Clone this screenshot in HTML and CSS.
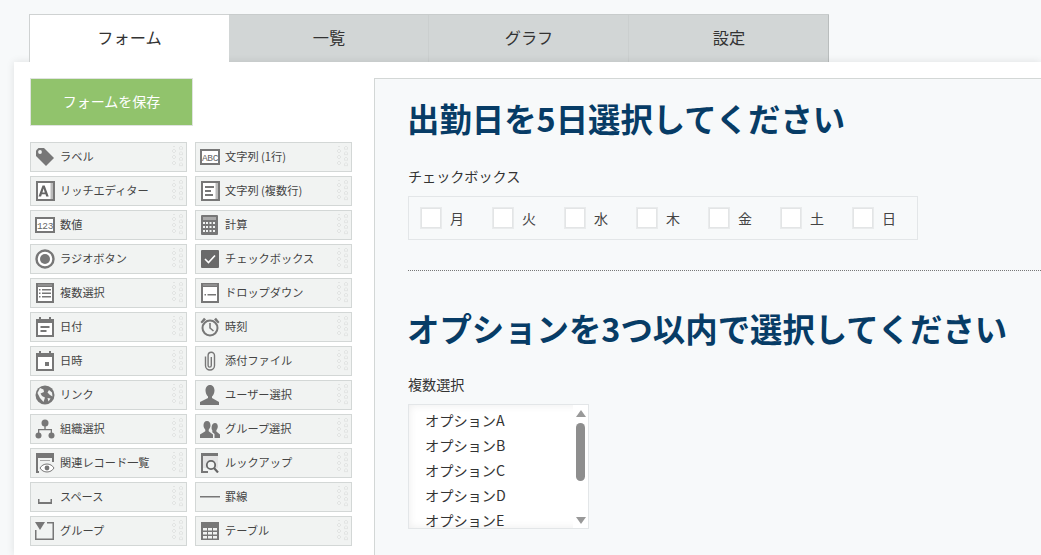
FILE: index.html
```html
<!DOCTYPE html>
<html lang="ja">
<head>
<meta charset="utf-8">
<title>フォーム</title>
<link rel="stylesheet" href="styles.css">
</head>
<body>
<nav class="tabs">
  <div class="tab active">フォーム</div>
  <div class="tab">一覧</div>
  <div class="tab">グラフ</div>
  <div class="tab">設定</div>
</nav>
<main class="panel">
  <aside class="side">
    <button class="save"><span>フォームを保存</span></button>
    <div class="palette">
      <div class="item"><svg class="ic" viewBox="0 0 20 20"><path d="M1 3.500 3.500 1H9l10 10-8 8L1 9Z"/><circle cx="5" cy="5" r="1.900" fill="#f1f3f2"/></svg><span>ラベル</span><i class="grip"></i></div>
      <div class="item"><svg class="ic" viewBox="0 0 20 20"><rect x="1" y="3" width="18" height="14" fill="#fff" stroke="#777" stroke-width="2"/><text x="10" y="13.500" class="ict">ABC</text></svg><span>文字列 (1行)</span><i class="grip"></i></div>

      <div class="item"><svg class="ic" viewBox="0 0 20 20"><rect x="1" y="0" width="19" height="20"/><rect x="3" y="2" width="15" height="16" fill="#fff"/><rect x="15.500" y="2" width="2.500" height="16" fill="#bbb"/><path d="M3.500 15.500 7.500 4.500h2.200l4 11h-2.500l-.7-2.200H6.800l-.7 2.200ZM7.400 11.500h2.400L8.600 7.500Z" fill="#666"/></svg><span>リッチエディター</span><i class="grip"></i></div>
      <div class="item"><svg class="ic" viewBox="0 0 20 20"><rect x="1" y="0" width="19" height="20"/><rect x="3" y="2" width="15" height="16" fill="#fff"/><rect x="15.500" y="2" width="2.500" height="16" fill="#bbb"/><path d="M5 5h9v2H5ZM5 9h6v2H5ZM5 13h8v2H5Z"/></svg><span>文字列 (複数行)</span><i class="grip"></i></div>

      <div class="item"><svg class="ic" viewBox="0 0 20 20"><rect x="1" y="3" width="18" height="14" fill="#fff" stroke="#777" stroke-width="2"/><text x="10" y="13.500" class="ict">123</text></svg><span>数値</span><i class="grip"></i></div>
      <div class="item"><svg class="ic" viewBox="0 0 20 20"><path d="M2 0h15a1 1 0 0 1 1 1v18a1 1 0 0 1-1 1H2a1 1 0 0 1-1-1V1a1 1 0 0 1 1-1Z"/><path d="M3 2h13v3H3Z" fill="#aaa"/><path d="M3 7h2v2H3ZM6 7h2v2H6ZM9.500 7h2v2h-2ZM13 7h2v2h-2ZM3 11h2v2H3ZM6 11h2v2H6ZM9.500 11h2v2h-2ZM13 11h2v2h-2ZM3 15h2v2H3ZM6 15h2v2H6ZM9.500 15h2v2h-2ZM13 15h2v2h-2Z" fill="#f1f3f2"/></svg><span>計算</span><i class="grip"></i></div>

      <div class="item"><svg class="ic" viewBox="0 0 20 20"><circle cx="10" cy="10" r="8.500" fill="#fff" stroke="#777" stroke-width="2.400"/><circle cx="10" cy="10" r="5"/></svg><span>ラジオボタン</span><i class="grip"></i></div>
      <div class="item"><svg class="ic" viewBox="0 0 20 20"><rect x="1" y="1" width="18" height="18" rx="1" fill="#6a6a6a"/><path d="m5 10 3.500 3.500L15 6.500" fill="none" stroke="#fff" stroke-width="1.600"/></svg><span>チェックボックス</span><i class="grip"></i></div>

      <div class="item"><svg class="ic" viewBox="0 0 20 20"><rect x="1" y="0" width="18" height="20"/><rect x="3" y="4" width="14" height="14" fill="#fff"/><path d="M3 1.500h14v1H3Z" fill="#aaa"/><path d="M4 6h1.500v1.500H4ZM7 6h9v1.500H7ZM4 9.500h1.500V11H4ZM7 9.500h9V11H7ZM4 13h1.500v1.500H4ZM7 13h9v1.500H7Z"/></svg><span>複数選択</span><i class="grip"></i></div>
      <div class="item"><svg class="ic" viewBox="0 0 20 20"><rect x="1" y="0" width="18" height="20"/><rect x="3" y="4" width="14" height="14" fill="#fff"/><path d="M3 1.500h14v1H3Z" fill="#aaa"/><path d="M4.500 11h1.500v1.500H4.500ZM7.500 11H16v1.500H7.500Z"/></svg><span>ドロップダウン</span><i class="grip"></i></div>

      <div class="item"><svg class="ic" viewBox="0 0 20 20"><path d="M4 0h2v2h8V0h2v2h3v18H1V2h3Z"/><rect x="3" y="6" width="14" height="12" fill="#fff"/><path d="M5.500 9h9v2h-9ZM5.500 13h6v2h-6Z"/></svg><span>日付</span><i class="grip"></i></div>
      <div class="item"><svg class="ic" viewBox="0 0 20 20"><circle cx="10" cy="11" r="7.500" fill="none" stroke="#777" stroke-width="2"/><path d="M10 6v5l3.500 3" fill="none" stroke="#777" stroke-width="1.600"/><path d="M0.500 5 4 0.800 6 2.500 2 6.500ZM19.500 5 16 0.800 14 2.500 18 6.500Z"/></svg><span>時刻</span><i class="grip"></i></div>

      <div class="item"><svg class="ic" viewBox="0 0 20 20"><path d="M4 0h2v2h8V0h2v2h3v18H1V2h3Z"/><rect x="3" y="6" width="14" height="12" fill="#fff"/><rect x="10" y="11" width="4" height="4"/></svg><span>日時</span><i class="grip"></i></div>
      <div class="item"><svg class="ic" viewBox="0 0 20 20"><path d="M5.500 5.500v9a4.500 4.500 0 0 0 9 0v-10a3.200 3.200 0 0 0-6.400 0v10a1.600 1.600 0 0 0 3.200 0V6" fill="none" stroke="#777" stroke-width="1.400"/></svg><span>添付ファイル</span><i class="grip"></i></div>

      <div class="item"><svg class="ic" viewBox="0 0 20 20"><circle cx="10" cy="10" r="9.500"/><path d="M5 3 8.500 4.500 9 7 5.500 8.500 7 11l3 1.500-1.500 4.500L5 13 2.500 8ZM14 5l3 2.500.5 4-2.500-1.500-2.500-2.500ZM12.500 13l3 .5-2 3Z" fill="#f1f3f2"/></svg><span>リンク</span><i class="grip"></i></div>
      <div class="item"><svg class="ic" viewBox="0 0 20 20"><path d="M10 0c3 0 4.500 2.500 4.500 5.500 0 2.500-1.200 5-2.500 6V13l7 4v3H0v-3l8-4v-1.500C6.700 10.500 5.500 8 5.500 5.500 5.500 2.500 7 0 10 0Z"/></svg><span>ユーザー選択</span><i class="grip"></i></div>

      <div class="item"><svg class="ic" viewBox="0 0 20 20"><circle cx="10" cy="4" r="3.500"/><circle cx="3.500" cy="16.500" r="3"/><circle cx="16.500" cy="16.500" r="3"/><path d="M9.300 6h1.400v4H17v4h-1.300v-2.700H4.300V14H3v-4h6.300Z"/></svg><span>組織選択</span><i class="grip"></i></div>
      <div class="item"><svg class="ic" viewBox="0 0 20 20"><path d="M7 2c2.300 0 3.500 2 3.500 4.300 0 2-.9 3.500-1.800 4.400v1.500l4.300 3.300V19H0v-3.500l5.300-3.300v-1.500C4.400 9.800 3.500 8.300 3.500 6.300 3.500 4 4.700 2 7 2Z"/><path d="M15 4c1.900 0 2.800 1.700 2.800 3.500 0 1.600-.7 2.800-1.400 3.500v1.500l3.600 3V19h-5.500v-4l-2.200-1.700v-2C11.500 10.500 11.500 9 11.700 7.500 12 5.500 13.200 4 15 4Z"/></svg><span>グループ選択</span><i class="grip"></i></div>

      <div class="item"><svg class="ic" viewBox="0 0 20 20"><path d="M1 0h18v9h-2V5H3v13h1v2H1Z"/><path d="M5 7h10v1H5Z" fill="#aaa"/><path d="M5 15c1.500-2.500 4-4 7-4s5.500 1.500 7 4c-1.500 2.500-4 4-7 4s-5.500-1.500-7-4Z" fill="#fff" stroke="#777"/><circle cx="12" cy="15" r="2.400"/></svg><span>関連レコード一覧</span><i class="grip"></i></div>
      <div class="item"><svg class="ic" viewBox="0 0 20 20"><path d="M1 0h17v3H3v15h5v2H1Z"/><rect x="3" y="3" width="15" height="12" fill="#e3e3e3"/><circle cx="11" cy="12" r="4.200" fill="#f1f3f2" stroke="#666" stroke-width="1.800"/><path d="m14 15 4 4.500" stroke="#666" stroke-width="2.200"/></svg><span>ルックアップ</span><i class="grip"></i></div>

      <div class="item"><svg class="ic" viewBox="0 0 20 20"><path d="M3 12h1.500v3h11v-3H17v5H3Z"/></svg><span>スペース</span><i class="grip"></i></div>
      <div class="item"><svg class="ic" viewBox="0 0 20 20"><rect x="0" y="9" width="20" height="1.500"/></svg><span>罫線</span><i class="grip"></i></div>

      <div class="item"><svg class="ic" viewBox="0 0 20 20"><path d="M0 1h10L5 9ZM12 1h7v18H0V9h1.500v8.500h16V2.500H12Z"/></svg><span>グループ</span><i class="grip"></i></div>
      <div class="item"><svg class="ic" viewBox="0 0 20 20"><path d="M1 1h18v18H1Z"/><path d="M3 7h4v2.500H3ZM8 7h4v2.500H8ZM13 7h4v2.500h-4ZM3 11h4v2.500H3ZM8 11h4v2.500H8ZM13 11h4v2.500h-4ZM3 15h4v2.500H3ZM8 15h4v2.500H8ZM13 15h4v2.500h-4Z" fill="#f1f3f2"/></svg><span>テーブル</span><i class="grip"></i></div>
    </div>
  </aside>
  <section class="canvas">
    <h2 class="title">出勤日を5日選択してください</h2>
    <div class="label">チェックボックス</div>
    <div class="checks">
      <label class="check"><i class="box"></i>月</label>
      <label class="check"><i class="box"></i>火</label>
      <label class="check"><i class="box"></i>水</label>
      <label class="check"><i class="box"></i>木</label>
      <label class="check"><i class="box"></i>金</label>
      <label class="check"><i class="box"></i>土</label>
      <label class="check"><i class="box"></i>日</label>
    </div>
    <hr class="rule">
    <h2 class="title second">オプションを3つ以内で選択してください</h2>
    <div class="label multi">複数選択</div>
    <div class="listbox">
      <ul class="options">
        <li>オプションA</li>
        <li>オプションB</li>
        <li>オプションC</li>
        <li>オプションD</li>
        <li>オプションE</li>
      </ul>
      <div class="scroll">
        <i class="up"></i>
        <i class="thumb"></i>
        <i class="down"></i>
      </div>
    </div>
  </section>
</main>
</body>
</html>
```
FILE: styles.css
```css
* { box-sizing: border-box; }
html, body { margin: 0; height: 100%; overflow: hidden; }
body {
  background: #f7f9fa;
  font-family: "Noto Sans CJK JP", "Noto Sans", sans-serif;
  color: #333;
  padding-top: 14px;
}
.tabs { display: flex; margin-left: 29px; height: 48px; }
.tab {
  width: 200px;
  background: #d2d6d6;
  border-top: 1px solid #c8cccc;
  box-shadow: inset -1px 0 0 #cbcfcf, 1px 0 0 #cbcfcf;
  text-align: center;
  font-size: 16.200px;
  line-height: 45px;
  color: #333;
}
.tab:last-child { box-shadow: inset -1px 0 0 #b9bdbd; }
.tab.active {
  background: #fff;
  border-left: 1px solid #cfd2d2;
  border-top: 1px solid #cfd2d2;
  box-shadow: none;
  position: relative;
  z-index: 2;
}
.panel {
  margin-left: 14px;
  background: #fff;
  display: flex;
  height: 493px;
  padding: 16px 0 0 16px;
  box-shadow: 0 0 8px rgba(0, 0, 0, .1);
  position: relative;
}
.side { width: 344px; flex: none; }
.save {
  display: block;
  width: 163px;
  height: 48px;
  background: #91c36c;
  border: 1px solid #dfe3df;
  color: #fff;
  font: 14px "Noto Sans CJK JP", sans-serif;
  padding: 0 0 2px;
}
.palette {
  display: grid;
  grid-template-columns: 157px 157px;
  column-gap: 8px;
  row-gap: 4px;
  margin-top: 16px;
}
.item {
  height: 30px;
  background: #f1f3f2;
  border: 1px solid #d3d7d6;
  display: flex;
  align-items: center;
  padding-left: 4px;
  font-size: 11.200px;
  color: #444;
  position: relative;
}
.item span { padding-bottom: 2px; }
.ic { width: 20px; height: 20px; fill: #777; flex: none; margin-right: 5px; }
.ict { font: 9.500px "Liberation Mono", monospace; text-anchor: middle; fill: #666; letter-spacing: -.4px; }
.grip {
  position: absolute;
  right: 3px;
  top: 3px;
  width: 11px;
  height: 21px;
  background-image:
    radial-gradient(circle at 2px 2px, transparent 1px, #e2e4e3 1.200px, #e2e4e3 1.900px, transparent 2.100px),
    radial-gradient(circle at 2px 2px, transparent 1px, #e2e4e3 1.200px, #e2e4e3 1.900px, transparent 2.100px);
  background-size: 4px 6px, 4px 5.500px;
  background-position: 0 3px, 7px 0;
  background-repeat: repeat-y;
}
.canvas {
  flex: 1;
  min-width: 0;
  background: #f7f9fa;
  border-left: 1px solid #d3d7d6;
  border-top: 1px solid #d3d7d6;
  padding: 0 0 0 33px;
}
.title {
  margin: 0 0 0 -1px;
  font-size: 32.400px;
  line-height: 44px;
  font-weight: 700;
  color: #073c66;
  padding-top: 17px;
  white-space: nowrap;
}
.label {
  font-size: 14.100px;
  line-height: 20px;
  color: #333;
  margin-top: 26px;
}
.checks {
  display: flex;
  width: 510px;
  height: 44px;
  border: 1px solid #e3e6e8;
  margin-top: 10px;
  padding-left: 12px;
  align-items: center;
}
.check {
  width: 72px;
  flex: none;
  display: flex;
  align-items: center;
  font-size: 14px;
  color: #444;
}
.box {
  width: 20px;
  height: 20px;
  background: #fff;
  border: 1px solid #e3e5e6;
  box-shadow: 0 0 0 1px #e9ebec;
  margin-right: 9px;
}
.rule {
  border: 0;
  border-top: 1px dotted #777;
  margin: 30px 0 0;
}
.title.second { padding-top: 35px; }
.label.multi { margin-top: 24px; }
.listbox {
  display: flex;
  width: 181px;
  height: 125px;
  border: 1px solid #e3e6e8;
  background: #fff;
  box-shadow: inset 0 0 8px rgba(0, 0, 0, .08);
  margin-top: 10px;
  overflow: hidden;
}
.options {
  list-style: none;
  margin: 0;
  padding: 3px 0 0 16px;
  flex: 1;
  font-size: 14.200px;
  line-height: 25px;
  color: #333;
}
.scroll {
  width: 15px;
  flex: none;
  background: #fff;
  display: flex;
  flex-direction: column;
  align-items: center;
  position: relative;
}
.up { width: 0; height: 0; border: 5px solid transparent; border-top: 0; border-bottom: 7px solid #999; margin-top: 5px; }
.thumb { width: 9px; height: 58px; background: #8e8e8e; border-radius: 5px; margin-top: 6px; }
.down { width: 0; height: 0; border: 5px solid transparent; border-bottom: 0; border-top: 7px solid #999; position: absolute; bottom: 4px; }
```
